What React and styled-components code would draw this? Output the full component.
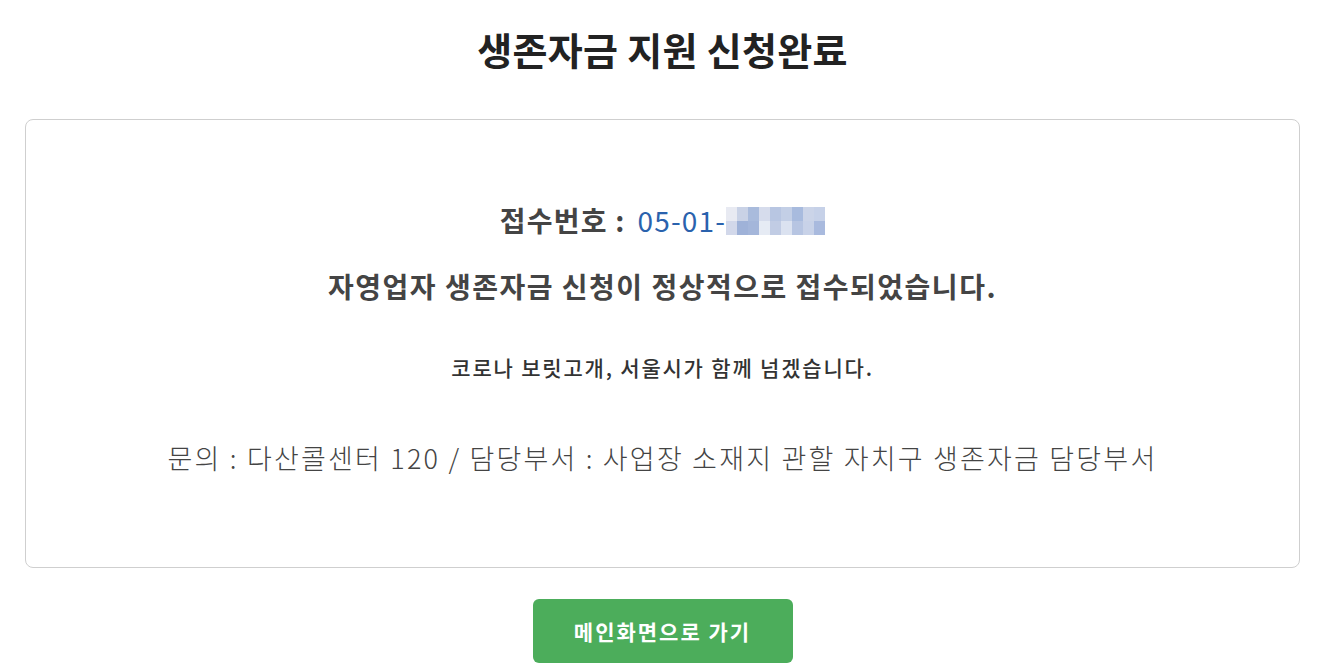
import React from "react";
import styled, { createGlobalStyle } from "styled-components";

const GlobalStyle = createGlobalStyle`
  body {
    margin: 0;
    background: #fff;
    font-family: "Noto Sans CJK KR", "Noto Sans", sans-serif;
  }
`;

const Page = styled.div`
  display: flex;
  flex-direction: column;
  align-items: center;
  padding: 0 28px 0 25px;
`;

const Title = styled.h1`
  margin: 0;
  height: 119px;
  display: flex;
  align-items: center;
  justify-content: center;
  padding-bottom: 22px;
  box-sizing: border-box;
  font-size: 38px;
  font-weight: 700;
  color: #222;
  letter-spacing: 0.3px;
`;

const ResultBox = styled.div`
  width: 100%;
  height: 449px;
  box-sizing: border-box;
  border: 1px solid #cfcfcf;
  border-radius: 8px;
  display: flex;
  flex-direction: column;
  align-items: center;
  padding-top: 78px;
`;

const ReceiptLine = styled.p`
  margin: 0;
  display: flex;
  align-items: center;
  font-size: 28px;
  font-weight: 700;
  color: #444;
  line-height: 44px;
  letter-spacing: 1.2px;
`;

const ReceiptNo = styled.span`
  color: #2a62ad;
  font-weight: 400;
  margin-left: 12px;
`;

const Mosaic = styled.span`
  display: inline-grid;
  grid-template-columns: repeat(9, 11px);
  grid-template-rows: 14px 14px;
  margin-top: 2px;
`;

const Cell = styled.span`
  background: ${({ $c }) => $c};
`;

const Message = styled.p`
  margin: 22px 0 0;
  font-size: 28px;
  font-weight: 700;
  color: #444;
  line-height: 44px;
  letter-spacing: 1.5px;
`;

const SubMessage = styled.p`
  margin: 44px 0 0;
  font-size: 21px;
  font-weight: 500;
  color: #333;
  line-height: 30px;
  letter-spacing: 1.8px;
`;

const Contact = styled.p`
  margin: 56px 0 0;
  font-size: 27px;
  font-weight: 300;
  color: #444;
  line-height: 40px;
  letter-spacing: 2.2px;
`;

const HomeButton = styled.button`
  margin-top: 31px;
  width: 260px;
  height: 64px;
  border: none;
  border-radius: 6px;
  background: #4cad5b;
  color: #fff;
  font-family: inherit;
  font-size: 21px;
  font-weight: 700;
  letter-spacing: 2px;
  cursor: pointer;
`;

const mosaicColors = [
  "#e8eaf2", "#c9d2e6", "#a9bbdc", "#d6dcec", "#b8c6e2", "#c3cfe6", "#a8bbde", "#cbd4e8", "#c6d1e8",
  "#d2d8ea", "#9fb2d8", "#a4b6da", "#e6ebf4", "#c1cce4", "#dbe2f0", "#b7c5e2", "#c8d2e8", "#a9bade",
];

function App() {
  return (
    <>
      <GlobalStyle />
      <Page>
        <Title>생존자금 지원 신청완료</Title>
        <ResultBox>
          <ReceiptLine>
            접수번호 :
            <ReceiptNo>05-01-</ReceiptNo>
            <Mosaic>
              {mosaicColors.map((c, i) => (
                <Cell key={i} $c={c} />
              ))}
            </Mosaic>
          </ReceiptLine>
          <Message>자영업자 생존자금 신청이 정상적으로 접수되었습니다.</Message>
          <SubMessage>코로나 보릿고개, 서울시가 함께 넘겠습니다.</SubMessage>
          <Contact>
            문의 : 다산콜센터 120 / 담당부서 : 사업장 소재지 관할 자치구 생존자금 담당부서
          </Contact>
        </ResultBox>
        <HomeButton>메인화면으로 가기</HomeButton>
      </Page>
    </>
  );
}

export default App;
